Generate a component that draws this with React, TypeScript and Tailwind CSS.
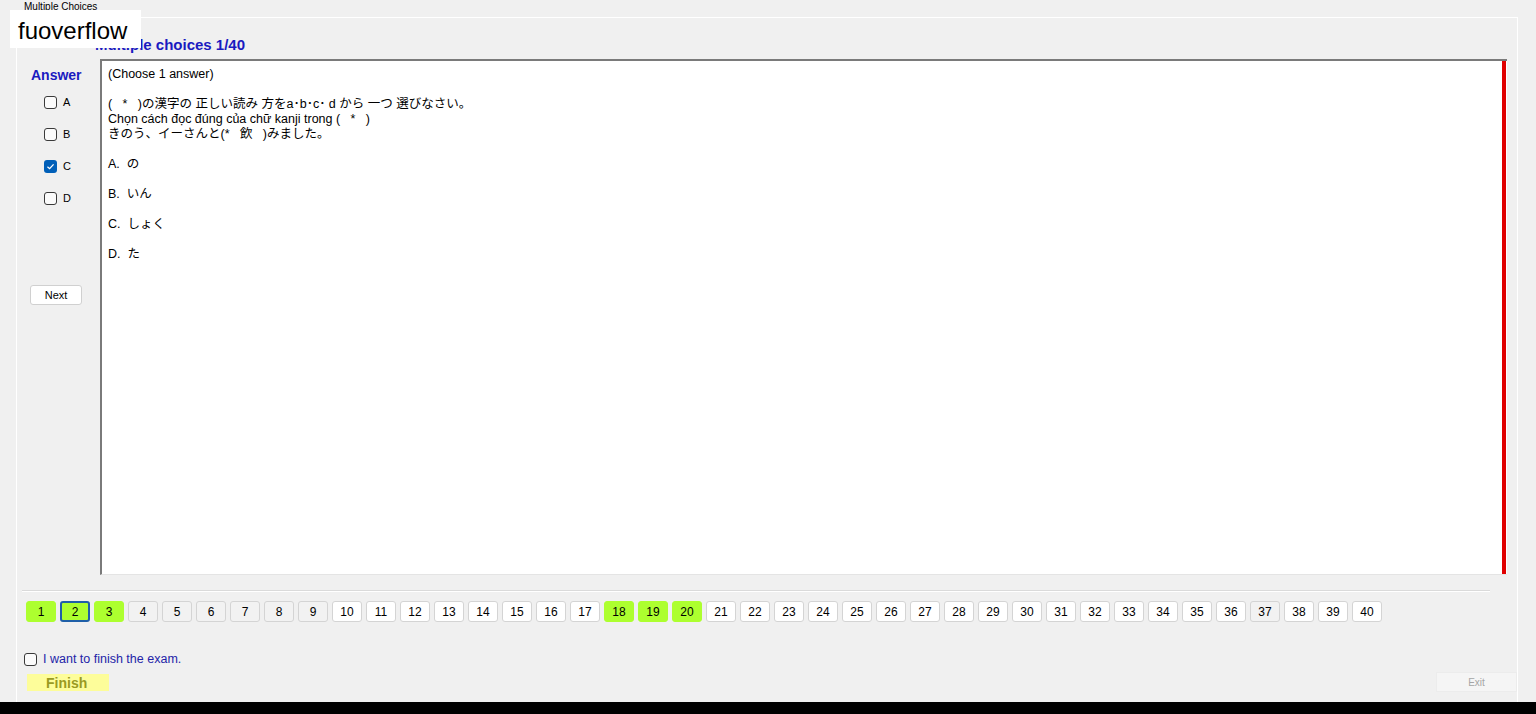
import React from 'react'

const answered = new Set([1, 2, 3, 18, 19, 20])
const greyed = new Set([4, 5, 6, 7, 8, 9, 37])

function Box({ checked }: { checked?: boolean }) {
  if (checked) {
    return (
      <span className="flex h-[13px] w-[13px] shrink-0 items-center justify-center rounded-[3px] bg-[#005fb8]">
        <svg viewBox="0 0 10 10" className="h-[9px] w-[9px]">
          <path d="M1.6 5.2 L4 7.4 L8.4 2.6" fill="none" stroke="white" strokeWidth="1.4" />
        </svg>
      </span>
    )
  }
  return <span className="h-[13px] w-[13px] shrink-0 rounded-[3px] border border-[#3a3a3a] bg-[#fbfbfb]" />
}

export default function App() {
  const options = ['A', 'B', 'C', 'D']

  return (
    <div className="relative h-[714px] w-full overflow-hidden bg-[#f0f0f0] font-['Liberation_Sans','Noto_Sans_CJK_JP',sans-serif] text-black">
      {/* watermark overlay */}
      <div className="absolute left-[10px] top-[10px] z-10 h-[38px] w-[131px] bg-white pl-[8px] text-[24px] leading-[42px]">
        fuoverflow
      </div>

      <div className="flex h-[702px] flex-col">
        <div className="h-[17px] pl-[24px] pt-[1px] text-[10px] leading-[12px]">Multiple Choices</div>

        {/* tab page */}
        <div className="ml-[16px] mr-[18px] flex flex-1 flex-col border-l border-r border-t border-white">
          <div className="h-[41px] pl-[78px] pt-[18px] text-[15px] font-bold leading-[17px] text-[#1a1ac0]">
            Multiple choices 1/40
          </div>

          <div className="flex h-[516px]">
            {/* answer column */}
            <div className="flex w-[83px] flex-col">
              <div className="pl-[14px] pt-[8px] text-[14px] font-bold leading-[16px] text-[#1a1ac0]">Answer</div>
              <div className="mt-[11px] flex flex-col gap-[16px] pl-[27px]">
                {options.map((o) => (
                  <div key={o} className="flex h-[16px] items-center gap-[6px] text-[11px]">
                    <Box checked={o === 'C'} />
                    <span>{o}</span>
                  </div>
                ))}
              </div>
              <button className="ml-[13px] mt-[79px] h-[20px] w-[52px] rounded-[3px] border border-[#d0d0d0] bg-white text-[11px] leading-[18px]">
                Next
              </button>
            </div>

            {/* question box */}
            <div className="flex w-[1407px] border-b border-l-2 border-t-2 border-b-[#e4e4e4] border-l-[#7a7a7a] border-t-[#7a7a7a] bg-white">
              <div className="flex-1 whitespace-pre pl-[6px] pt-[6px] text-[12.5px] leading-[15px]">
                <div>(Choose 1 answer)</div>
                <div> </div>
                <div>(   *   )の漢字の 正しい読み 方をa･b･c･ d から 一つ 選びなさい。</div>
                <div>Chọn cách đọc đúng của chữ kanji trong (   *   )</div>
                <div>きのう、イーさんと(*   飲   )みました。</div>
                <div> </div>
                <div>A.  の</div>
                <div> </div>
                <div>B.  いん</div>
                <div> </div>
                <div>C.  しょく</div>
                <div> </div>
                <div>D.  た</div>
              </div>
              <div className="w-[4px] bg-[#e00000]" />
              <div className="w-[1px] bg-white" />
            </div>
          </div>

          {/* separator */}
          <div className="ml-[5px] mt-[15px] h-[2px] w-[1468px] border-b border-t border-b-white border-t-[#dadada]" />

          {/* question numbers */}
          <div className="ml-[9px] mt-[9px] flex gap-[4px]">
            {Array.from({ length: 40 }, (_, i) => i + 1).map((n) => {
              const isGreen = answered.has(n)
              const isCurrent = n === 2
              const bg = isGreen ? 'bg-[#adff2f]' : greyed.has(n) ? 'bg-[#f2f2f2]' : 'bg-white'
              const border = isCurrent
                ? 'border-2 border-[#1f5fa8]'
                : isGreen
                  ? 'border border-[#adff2f]'
                  : 'border border-[#d4d4d4]'
              return (
                <button
                  key={n}
                  className={`flex h-[21px] w-[30px] items-center justify-center rounded-[3px] text-[12px] ${bg} ${border}`}
                >
                  {n}
                </button>
              )
            })}
          </div>

          {/* finish */}
          <div className="ml-[7px] mt-[31px] flex h-[13px] items-center gap-[6px]">
            <Box />
            <span className="text-[12.5px] text-[#2424a8]">I want to finish the exam.</span>
          </div>
          <div className="mt-[6px] flex items-center justify-between">
            <div className="ml-[10px] h-[17px] w-[82px] bg-[#fdfd9a] pl-[19px] text-[14px] font-bold leading-[18px] text-[#9a9a22]">
              Finish
            </div>
            <div className="flex h-[20px] w-[81px] items-center justify-center border border-[#ececec] bg-[#f5f5f5] text-[10px] text-[#a5a5a5]">
              Exit
            </div>
          </div>
        </div>
      </div>
      <div className="h-[12px] bg-black" />
    </div>
  )
}
